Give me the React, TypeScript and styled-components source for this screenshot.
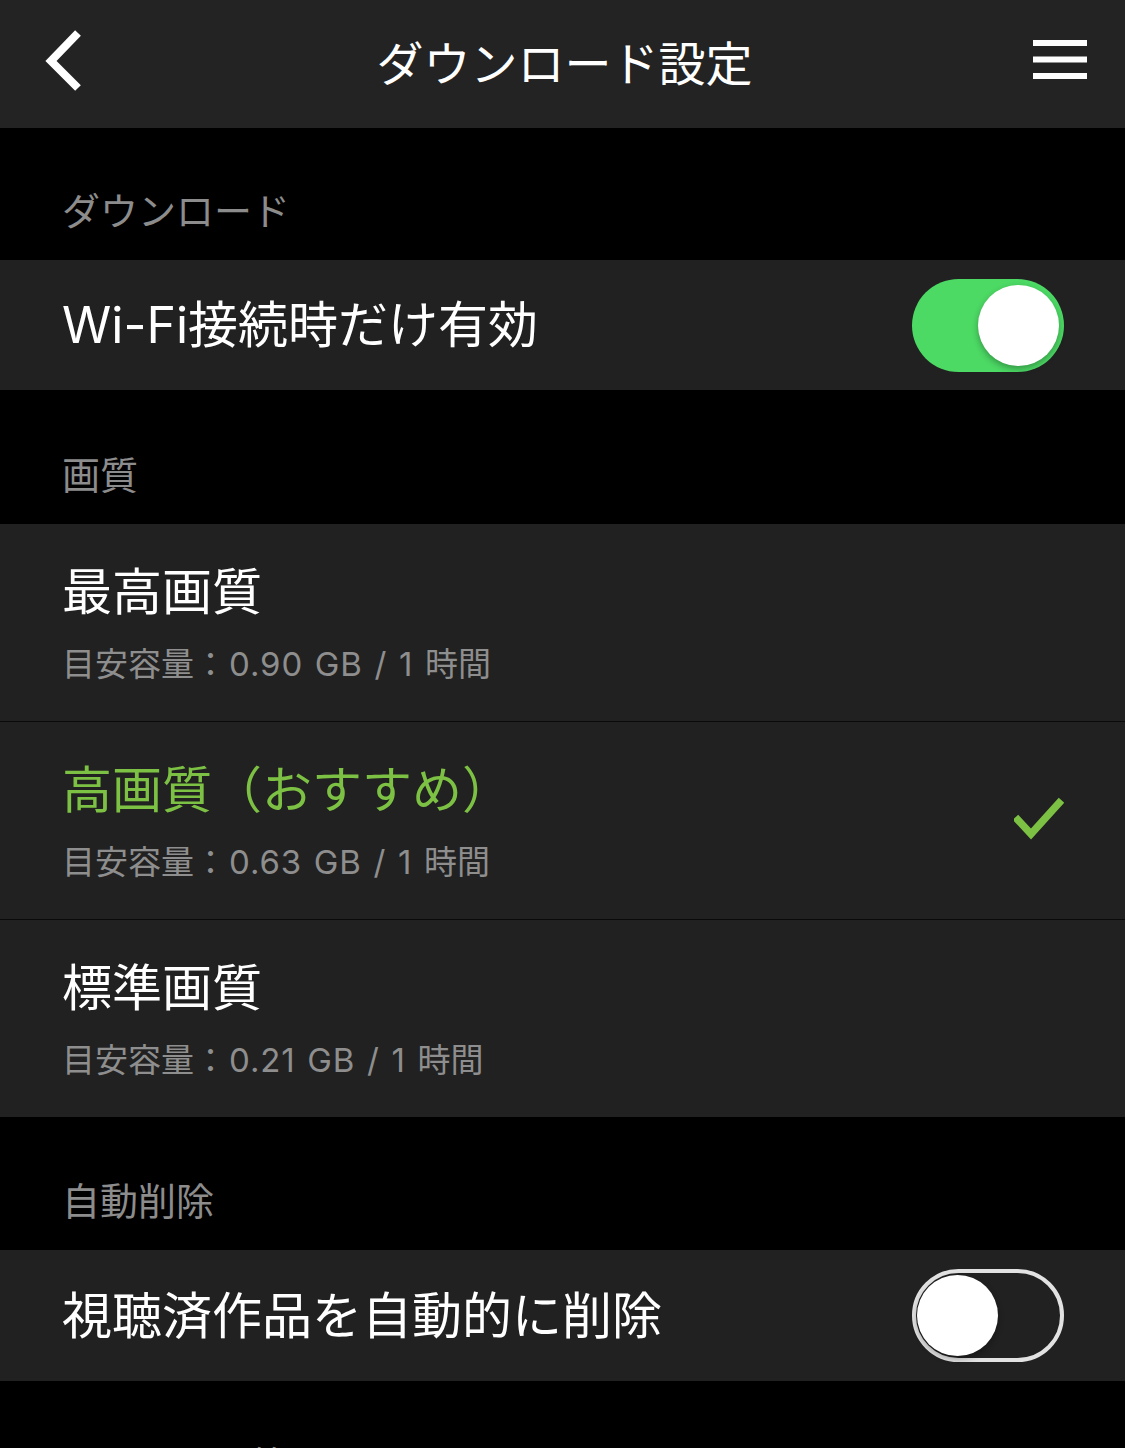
import styled, { createGlobalStyle } from "styled-components"

const GlobalStyle = createGlobalStyle`
    html, body {
        margin: 0;
        padding: 0;
        background: #000;
    }
    body {
        font-family: "Inter", "Noto Sans CJK JP", sans-serif;
        -webkit-font-smoothing: antialiased;
    }
`

const Page = styled.div`
    width: 1125px;
    height: 1448px;
    overflow: hidden;
    background: #000;
    color: #fff;
`

const Header = styled.header`
    height: 128px;
    background: #232323;
    display: grid;
    grid-template-columns: 1fr auto 1fr;
    align-items: center;
    padding: 0 38px 8px 42px;
    box-sizing: border-box;
`

const Title = styled.h1`
    margin: 0;
    font-size: 47px;
    font-weight: 400;
    letter-spacing: 0;
    color: #fff;
`

const IconButton = styled.button<{ align: "start" | "end" }>`
    background: none;
    border: none;
    padding: 0;
    display: flex;
    justify-self: ${({ align }) => align};
    cursor: pointer;
`

const SectionHeader = styled.div<{ h: number }>`
    height: ${({ h }) => h}px;
    display: flex;
    align-items: flex-end;
    padding: 0 0 26px 62px;
    box-sizing: border-box;
    font-size: 38px;
    line-height: 46px;
    color: #8c8c8c;
`

const Row = styled.div<{ h: number; divider?: boolean }>`
    height: ${({ h }) => h}px;
    background: #212121;
    display: flex;
    align-items: center;
    justify-content: space-between;
    padding: 0 61px 0 62px;
    box-sizing: content-box;
    border-bottom: ${({ divider }) => divider ? "1px solid #0a0a0a" : "none"};
`

const RowText = styled.div`
    display: flex;
    flex-direction: column;
`

const Label = styled.div<{ active?: boolean }>`
    font-size: 50px;
    line-height: 60px;
    color: ${({ active }) => active ? "#7cc143" : "#fff"};
`

const Sub = styled.div`
    margin-top: 22px;
    font-size: 33px;
    line-height: 40px;
    color: #8e8e8e;

    .num {
        letter-spacing: 0.9px;
        word-spacing: 1.5px;
        margin-left: 2px;
    }
`

const Track = styled.div<{ on: boolean }>`
    width: 152px;
    height: 93px;
    border-radius: 47px;
    box-sizing: border-box;
    position: relative;
    background: ${({ on }) => on ? "#4cd964" : "#212121"};
    border: ${({ on }) => on ? "none" : "4px solid #e2e2e2"};
`

const Knob = styled.div<{ on: boolean }>`
    position: absolute;
    width: 81px;
    height: 81px;
    border-radius: 50%;
    background: #fff;
    top: ${({ on }) => on ? "6px" : "2px"};
    left: ${({ on }) => on ? "66px" : "1px"};
    box-shadow: 0 3px 6px rgba(0, 0, 0, 0.3);
`

const Toggle = ({ on }: { on: boolean }) => (
    <Track on={on}>
        <Knob on={on} />
    </Track>
)

const Check = () => (
    <svg width="50" height="48" viewBox="0 0 50 48">
        <path d="M4 23 L17 37 L45 6" fill="none" stroke="#7cc143" strokeWidth="7.5" strokeLinecap="square" />
    </svg>
)

const qualities = [
    { name: "最高画質", size: "0.90", active: false },
    { name: "高画質（おすすめ）", size: "0.63", active: true },
    { name: "標準画質", size: "0.21", active: false },
]

const App = () => {
    return (
        <Page>
            <GlobalStyle />
            <Header>
                <IconButton align="start">
                    <svg width="44" height="64" viewBox="0 0 44 64">
                        <path d="M36 5 L9 33 L36 60" fill="none" stroke="#fff" strokeWidth="8" />
                    </svg>
                </IconButton>
                <Title>ダウンロード設定</Title>
                <IconButton align="end">
                    <svg width="54" height="44" viewBox="0 0 54 44">
                        <rect x="0" y="2" width="54" height="6" fill="#fff" />
                        <rect x="0" y="18.5" width="54" height="6" fill="#fff" />
                        <rect x="0" y="35" width="54" height="6" fill="#fff" />
                    </svg>
                </IconButton>
            </Header>

            <SectionHeader h={132}>ダウンロード</SectionHeader>
            <Row h={130}>
                <Label>Wi-Fi接続時だけ有効</Label>
                <Toggle on={true} />
            </Row>

            <SectionHeader h={134}>画質</SectionHeader>
            {qualities.map((q, i) => (
                <Row key={q.name} h={197} divider={i < qualities.length - 1}>
                    <RowText>
                        <Label active={q.active}>{q.name}</Label>
                        <Sub>目安容量：<span className="num">{q.size} GB / 1 </span>時間</Sub>
                    </RowText>
                    {q.active && <Check />}
                </Row>
            ))}

            <SectionHeader h={133}>自動削除</SectionHeader>
            <Row h={131}>
                <Label>視聴済作品を自動的に削除</Label>
                <Toggle on={false} />
            </Row>

            <SectionHeader h={133}>ストレージ管理</SectionHeader>
        </Page>
    )
}

export default App
